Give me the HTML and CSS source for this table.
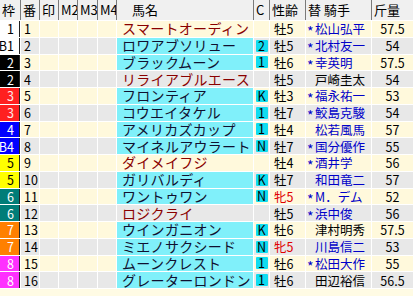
FILE: index.html
```html
<!DOCTYPE html>
<html lang="ja">
<head>
<meta charset="utf-8">
<title>出馬表</title>
<link rel="stylesheet" href="styles.css">
</head>
<body>
<div class="table">
  <div class="row head">
    <div class="c">枠</div><div class="c">番</div><div class="c">印</div><div class="c">M2</div><div class="c">M3</div><div class="c">M4</div><div class="c hname">馬名</div><div class="c">C</div><div class="c">性齢</div><div class="c">替 騎手</div><div class="c">斤量</div>
  </div>

  <div class="row odd"><div class="c waku w1">1</div><div class="c num">1</div><div class="c"></div><div class="c"></div><div class="c"></div><div class="c"></div><div class="c name">スマートオーディン</div><div class="c cc"></div><div class="c sex">牡5</div><div class="c jk"><span class="mk">*</span>松山弘平</div><div class="c wt">57.5</div></div>
  <div class="row even"><div class="c waku w1">B1</div><div class="c num">2</div><div class="c"></div><div class="c"></div><div class="c"></div><div class="c"></div><div class="c name cy">ロワアブソリュー</div><div class="c cc"><span class="bd">2</span></div><div class="c sex">牡5</div><div class="c jk"><span class="mk">*</span>北村友一</div><div class="c wt">54</div></div>
  <div class="row odd"><div class="c waku w2">2</div><div class="c num">3</div><div class="c"></div><div class="c"></div><div class="c"></div><div class="c"></div><div class="c name cy">ブラックムーン</div><div class="c cc"><span class="bd">1</span></div><div class="c sex">牡6</div><div class="c jk"><span class="mk">*</span>幸英明</div><div class="c wt">57.5</div></div>
  <div class="row even"><div class="c waku w2">2</div><div class="c num">4</div><div class="c"></div><div class="c"></div><div class="c"></div><div class="c"></div><div class="c name">リライアブルエース</div><div class="c cc"></div><div class="c sex">牡5</div><div class="c jk blk"><span class="mk"></span>戸崎圭太</div><div class="c wt">54</div></div>
  <div class="row odd"><div class="c waku w3">3</div><div class="c num">5</div><div class="c"></div><div class="c"></div><div class="c"></div><div class="c"></div><div class="c name cy">フロンティア</div><div class="c cc"><span class="bd">K</span></div><div class="c sex">牡3</div><div class="c jk"><span class="mk">*</span>福永祐一</div><div class="c wt">53</div></div>
  <div class="row even"><div class="c waku w3">3</div><div class="c num">6</div><div class="c"></div><div class="c"></div><div class="c"></div><div class="c"></div><div class="c name cy">コウエイタケル</div><div class="c cc"><span class="bd">1</span></div><div class="c sex">牡7</div><div class="c jk"><span class="mk">*</span>鮫島克駿</div><div class="c wt">54</div></div>
  <div class="row odd"><div class="c waku w4">4</div><div class="c num">7</div><div class="c"></div><div class="c"></div><div class="c"></div><div class="c"></div><div class="c name cy">アメリカズカップ</div><div class="c cc"><span class="bd">1</span></div><div class="c sex">牡4</div><div class="c jk"><span class="mk"></span>松若風馬</div><div class="c wt">57</div></div>
  <div class="row even"><div class="c waku w4">B4</div><div class="c num">8</div><div class="c"></div><div class="c"></div><div class="c"></div><div class="c"></div><div class="c name cy">マイネルアウラート</div><div class="c cc"><span class="bd">N</span></div><div class="c sex">牡7</div><div class="c jk"><span class="mk">*</span>国分優作</div><div class="c wt">55</div></div>
  <div class="row odd"><div class="c waku w5">5</div><div class="c num">9</div><div class="c"></div><div class="c"></div><div class="c"></div><div class="c"></div><div class="c name">ダイメイフジ</div><div class="c cc"></div><div class="c sex">牡4</div><div class="c jk"><span class="mk">*</span>酒井学</div><div class="c wt">56</div></div>
  <div class="row even"><div class="c waku w5">5</div><div class="c num">10</div><div class="c"></div><div class="c"></div><div class="c"></div><div class="c"></div><div class="c name cy">ガリバルディ</div><div class="c cc"><span class="bd">K</span></div><div class="c sex">牡7</div><div class="c jk"><span class="mk"></span>和田竜二</div><div class="c wt">57</div></div>
  <div class="row odd"><div class="c waku w6">6</div><div class="c num">11</div><div class="c"></div><div class="c"></div><div class="c"></div><div class="c"></div><div class="c name cy">ワントゥワン</div><div class="c cc"><span class="bd">N</span></div><div class="c sex fem">牝5</div><div class="c jk"><span class="mk">*</span>M．デム</div><div class="c wt">52</div></div>
  <div class="row even"><div class="c waku w6">6</div><div class="c num">12</div><div class="c"></div><div class="c"></div><div class="c"></div><div class="c"></div><div class="c name">ロジクライ</div><div class="c cc"></div><div class="c sex">牡5</div><div class="c jk"><span class="mk">*</span>浜中俊</div><div class="c wt">56</div></div>
  <div class="row odd"><div class="c waku w7">7</div><div class="c num">13</div><div class="c"></div><div class="c"></div><div class="c"></div><div class="c"></div><div class="c name cy">ウインガニオン</div><div class="c cc"><span class="bd">K</span></div><div class="c sex">牡6</div><div class="c jk blk"><span class="mk"></span>津村明秀</div><div class="c wt">57.5</div></div>
  <div class="row even"><div class="c waku w7">7</div><div class="c num">14</div><div class="c"></div><div class="c"></div><div class="c"></div><div class="c"></div><div class="c name cy">ミエノサクシード</div><div class="c cc"><span class="bd">N</span></div><div class="c sex fem">牝5</div><div class="c jk"><span class="mk"></span>川島信二</div><div class="c wt">53</div></div>
  <div class="row odd"><div class="c waku w8">8</div><div class="c num">15</div><div class="c"></div><div class="c"></div><div class="c"></div><div class="c"></div><div class="c name cy">ムーンクレスト</div><div class="c cc"><span class="bd">1</span></div><div class="c sex">牡6</div><div class="c jk"><span class="mk">*</span>松田大作</div><div class="c wt">55</div></div>
  <div class="row even"><div class="c waku w8">8</div><div class="c num">16</div><div class="c"></div><div class="c"></div><div class="c"></div><div class="c"></div><div class="c name cy">グレーターロンドン</div><div class="c cc"><span class="bd">1</span></div><div class="c sex">牡6</div><div class="c jk blk"><span class="mk"></span>田辺裕信</div><div class="c wt">56.5</div></div>
</div>
</body>
</html>
```

FILE: styles.css
```css
html, body {
  margin: 0;
  padding: 0;
}
body {
  width: 413px;
  height: 296px;
  overflow: hidden;
  background: #fffbe4;
  font-family: "Noto Sans CJK JP", "Noto Sans", sans-serif;
  font-size: 12.5px;
  color: #000;
}
.table {
  display: flex;
  flex-direction: column;
  gap: 1px;
  background: #ffffff;
  padding-bottom: 1px;
}
.row {
  display: grid;
  grid-template-columns: 20px 18px 18px 18px 19px 18px 136px 15px 35px 65px 1fr;
  column-gap: 1px;
  height: 15.75px;
}
.row.head {
  height: 20px;
  background: #f0f0f0;
}
.c {
  display: flex;
  align-items: center;
  white-space: nowrap;
  line-height: 15px;
  min-width: 0;
}
.head .c {
  background: #f0f0f0;
  padding-left: 2px;
  box-shadow: -1px 0 0 #7a7a7a;
  font-size: 13px;
  line-height: 20px;
}
.head .c:first-child {
  box-shadow: none;
}
.head .hname {
  padding-left: 15px;
}
.odd .c {
  background: #fff9dc;
}
.even .c {
  background: #e8e8e8;
}
.waku {
  justify-content: flex-end;
  padding-right: 5px;
  border-right: 1px solid #222;
}
.row .w1 { background: #ffffff; color: #000; }
.row .w2 { background: #000000; color: #fff; }
.row .w3 { background: #ff2020; color: #ffe8e8; }
.row .w4 { background: #0000ff; color: #fff; }
.row .w5 { background: #ffff00; color: #000; }
.row .w6 { background: #007d78; color: #fff; }
.row .w7 { background: #ff8000; color: #fff; }
.row .w8 { background: #ff30ff; color: #fff; }
.num {
  padding-left: 3px;
}
.name {
  padding-left: 5px;
  font-size: 14px;
  letter-spacing: 0.3px;
  color: #8a0000;
}
.row .cy {
  background: #80f0fa;
  color: #101030;
}
.cc {
  justify-content: center;
}
.bd {
  display: flex;
  align-items: center;
  justify-content: center;
  width: 12px;
  height: 12px;
  line-height: 12px;
  background: #10dcf0;
  border-radius: 1px;
}
.sex {
  padding-left: 4px;
}
.fem {
  color: #e00000;
}
.jk {
  color: #0000c8;
  padding-left: 1px;
}
.jk.blk {
  color: #000;
}
.mk {
  display: inline-block;
  width: 8px;
  font-size: 14px;
  transform: translateY(3px);
}
.wt {
  justify-content: center;
}
```
